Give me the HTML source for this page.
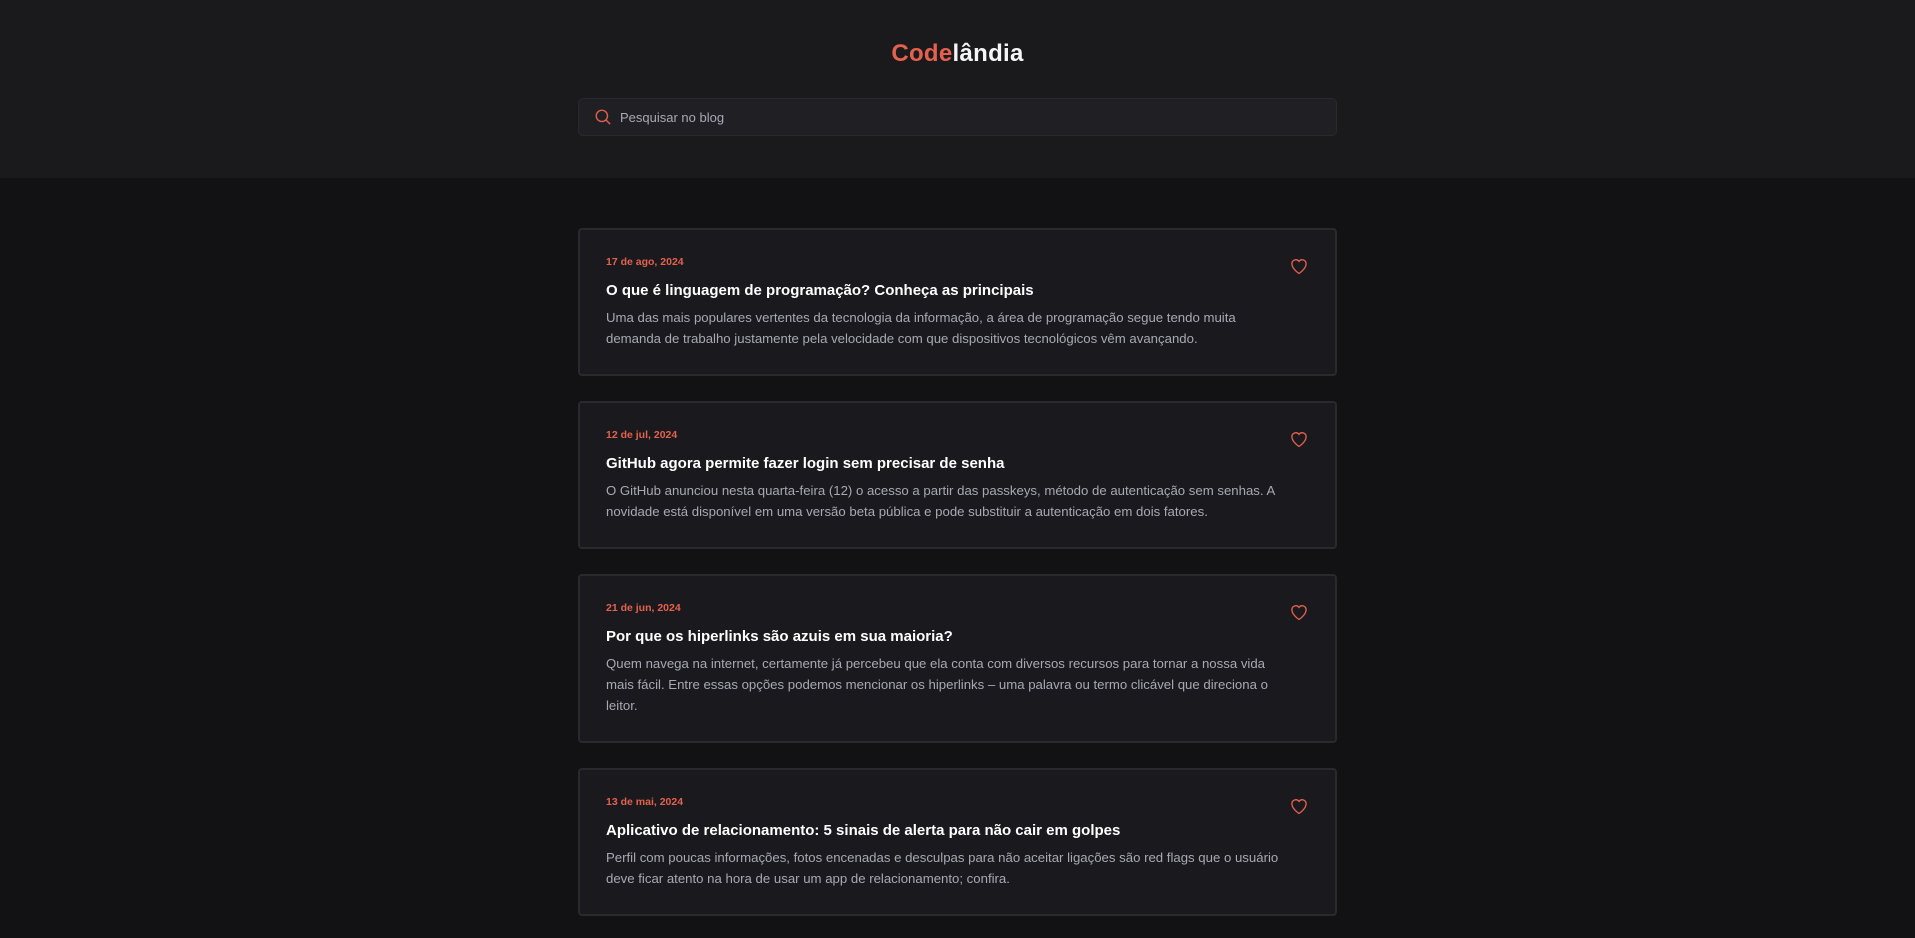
<!DOCTYPE html>
<html><head><meta charset="utf-8"><style>
*{margin:0;padding:0;box-sizing:border-box}
body{width:1915px;height:938px;background:#121214;font-family:"Liberation Sans",sans-serif;overflow:hidden}
header{height:178px;background:#1a1a1d;padding-top:39px}
h1{text-align:center;font-size:24px;font-weight:700;color:#f5f5f5;letter-spacing:0.3px;line-height:30px}
h1 span{color:#e5614d}
.search{width:759px;margin:29px auto 0;height:38px;background:#202024;border:1px solid #29292e;border-radius:5px;display:flex;align-items:center;padding-left:15px;color:#a8a8b3;font-size:13px}
.search svg{margin-right:8px}
main{padding-top:50px}
.card{position:relative;width:759px;margin:0 auto 25px;background:#1a1a1e;border:2px solid #29292e;border-radius:4px;padding:25px 26px 25px}
.date{color:#e5614d;font-size:10.5px;font-weight:700;line-height:14px}
.title{color:#fff;font-size:15px;font-weight:700;margin-top:12px;line-height:20px}
.desc{color:#a8a8b3;font-size:13.2px;line-height:21px;margin-top:6px;width:680px}
.heart{position:absolute;right:26px;top:26px}
</style></head><body>
<header><h1><span>Code</span>lândia</h1>
<div class="search"><svg width="18" height="18" viewBox="0 0 24 24" fill="none" stroke="#e5614d" stroke-width="1.8"><circle cx="10.5" cy="10.5" r="7.5"/><path d="M16 16l5.5 5.5"/></svg>Pesquisar no blog</div></header>
<main>
<div class="card"><div class="date">17 de ago, 2024</div><div class="title">O que é linguagem de programação? Conheça as principais</div><div class="desc">Uma das mais populares vertentes da tecnologia da informação, a área de programação segue tendo muita demanda de trabalho justamente pela velocidade com que dispositivos tecnológicos vêm avançando.</div><svg class="heart" width="20" height="20" viewBox="0 0 24 24" fill="none" stroke="#e5614d" stroke-width="1.6"><path d="M12 21s-8.5-5.5-8.5-11.5A4.7 4.7 0 0 1 12 6.5a4.7 4.7 0 0 1 8.5 3C20.5 15.5 12 21 12 21z"/></svg></div>
<div class="card"><div class="date">12 de jul, 2024</div><div class="title">GitHub agora permite fazer login sem precisar de senha</div><div class="desc">O GitHub anunciou nesta quarta-feira (12) o acesso a partir das passkeys, método de autenticação sem senhas. A novidade está disponível em uma versão beta pública e pode substituir a autenticação em dois fatores.</div><svg class="heart" width="20" height="20" viewBox="0 0 24 24" fill="none" stroke="#e5614d" stroke-width="1.6"><path d="M12 21s-8.5-5.5-8.5-11.5A4.7 4.7 0 0 1 12 6.5a4.7 4.7 0 0 1 8.5 3C20.5 15.5 12 21 12 21z"/></svg></div>
<div class="card"><div class="date">21 de jun, 2024</div><div class="title">Por que os hiperlinks são azuis em sua maioria?</div><div class="desc">Quem navega na internet, certamente já percebeu que ela conta com diversos recursos para tornar a nossa vida mais fácil. Entre essas opções podemos mencionar os hiperlinks – uma palavra ou termo clicável que direciona o leitor.</div><svg class="heart" width="20" height="20" viewBox="0 0 24 24" fill="none" stroke="#e5614d" stroke-width="1.6"><path d="M12 21s-8.5-5.5-8.5-11.5A4.7 4.7 0 0 1 12 6.5a4.7 4.7 0 0 1 8.5 3C20.5 15.5 12 21 12 21z"/></svg></div>
<div class="card"><div class="date">13 de mai, 2024</div><div class="title">Aplicativo de relacionamento: 5 sinais de alerta para não cair em golpes</div><div class="desc">Perfil com poucas informações, fotos encenadas e desculpas para não aceitar ligações são red flags que o usuário deve ficar atento na hora de usar um app de relacionamento; confira.</div><svg class="heart" width="20" height="20" viewBox="0 0 24 24" fill="none" stroke="#e5614d" stroke-width="1.6"><path d="M12 21s-8.5-5.5-8.5-11.5A4.7 4.7 0 0 1 12 6.5a4.7 4.7 0 0 1 8.5 3C20.5 15.5 12 21 12 21z"/></svg></div>
</main>
</body></html>
